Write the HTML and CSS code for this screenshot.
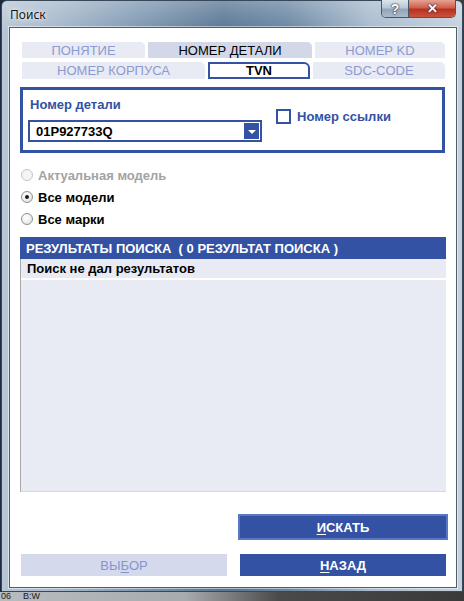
FILE: index.html
```html
<!DOCTYPE html>
<html lang="ru">
<head>
    <meta charset="UTF-8">
    <title>Поиск</title>
    <link rel="stylesheet" href="styles.css">
</head>
<body>
    <div class="window">
        <div class="titlebar">
            <span class="title">Поиск</span>
            <div class="caption-buttons">
                <span class="cap-btn cap-help">?</span>
                <span class="cap-btn cap-close">✕</span>
            </div>
        </div>
        <div class="client">
            <div class="tabs">
                <div class="tab-row">
                    <div class="tab w-concept">ПОНЯТИЕ</div>
                    <div class="tab tab-hover w-part">НОМЕР ДЕТАЛИ</div>
                    <div class="tab w-kd">НОМЕР KD</div>
                </div>
                <div class="tab-row row-2">
                    <div class="tab w-body">НОМЕР КОРПУСА</div>
                    <div class="tab tab-active w-tvn">TVN</div>
                    <div class="tab w-sdc">SDC-CODE</div>
                </div>
            </div>

            <div class="group">
                <div class="field">
                    <label class="field-label">Номер детали</label>
                    <div class="combo">
                        <span class="combo-value">01P927733Q</span>
                        <span class="combo-arrow"></span>
                    </div>
                </div>
                <label class="check">
                    <span class="check-box"></span>
                    <span class="check-label">Номер ссылки</span>
                </label>
            </div>

            <div class="radios">
                <div class="radio disabled"><span class="dot"></span>Актуальная модель</div>
                <div class="radio checked"><span class="dot"></span>Все модели</div>
                <div class="radio"><span class="dot"></span>Все марки</div>
            </div>

            <div class="results">
                <div class="results-head">РЕЗУЛЬТАТЫ ПОИСКА&nbsp; ( 0 РЕЗУЛЬТАТ ПОИСКА )</div>
                <div class="results-list">
                    <div class="results-row">Поиск не дал результатов</div>
                </div>
            </div>

            <div class="btn btn-search"><u>И</u>СКАТЬ</div>
            <div class="btn-row">
                <div class="btn btn-disabled">ВЫ<u>Б</u>ОР</div>
                <div class="btn"><u>Н</u>АЗАД</div>
            </div>
        </div>
    </div>
    <div class="desk-strip"><span>06</span><span>B:W</span></div>
</body>
</html>
```

FILE: styles.css
```css
:root {
    --blue: #3352a3;
    --blue-light: #5b77c2;
    --tab-bg: #e8eaf4;
    --tab-text: #8d9ad0;
    --list-bg: #e8ebf4;
}

* {
    box-sizing: border-box;
    margin: 0;
    padding: 0;
}

body {
    width: 464px;
    height: 601px;
    overflow: hidden;
    font-family: "Liberation Sans", Arial, sans-serif;
    font-size: 13px;
    background: linear-gradient(90deg, #1d2a3d 0%, #2a3a52 50%, #3b3b3b 100%);
}

/* окно с рамкой в стиле Aero */
.window {
    margin-left: 1px;
    width: 462px;
    height: 592px;
    display: flex;
    flex-direction: column;
    border: 1px solid #39475a;
    border-radius: 6px 6px 0 0;
    background:
        linear-gradient(180deg, rgba(255, 255, 255, 0.25) 0%, rgba(255, 255, 255, 0) 30px),
        linear-gradient(90deg, #b7c6d6 0%, #a5b8cb 12%, #7d97b1 30%, #577592 48%, #6886a3 62%, #a7bacd 80%, #c4d1de 100%);
}

.titlebar {
    height: 26px;
    flex: none;
    display: flex;
    padding: 0 6px 0 8px;
}

.title {
    align-self: center;
    margin-top: 1px;
    font-family: "Noto Sans", "Liberation Sans", sans-serif;
    font-size: 12px;
    color: #101820;
    text-shadow: 0 0 6px rgba(255, 255, 255, 0.9), 0 0 3px rgba(255, 255, 255, 0.8);
}

.caption-buttons {
    margin-left: auto;
    display: flex;
    height: 18px;
    margin-top: -1px;
    border: 1px solid #4a5566;
    border-top: none;
    border-radius: 0 0 5px 5px;
    overflow: hidden;
}

.cap-btn {
    display: flex;
    align-items: center;
    justify-content: center;
    font-weight: bold;
    color: #fff;
    text-shadow: 0 0 2px #2a2a2a, 0 0 1px #000;
}

.cap-help {
    width: 27px;
    font-size: 14px;
    border-right: 1px solid #4a5566;
    background: linear-gradient(180deg, #dde5ee 0%, #b9c7d6 45%, #93a6ba 55%, #a9bacb 100%);
}

.cap-close {
    width: 46px;
    font-size: 13px;
    background: linear-gradient(180deg, #e5a393 0%, #d0604c 45%, #b8301e 55%, #c9533e 100%);
}

/* клиентская область */
.client {
    margin: 0 5px 0 7px;
    width: 448px;
    height: 561px;
    display: flex;
    flex-direction: column;
    padding: 14px 10px 0 10px;
    background: #fff;
    border: 1px solid #4f5d6d;
    box-shadow: 0 0 0 1px rgba(255, 255, 255, 0.5);
}

/* вкладки */
.tabs {
    margin-left: 2px;
}

.tab-row {
    display: flex;
    gap: 3px;
    height: 16px;
}

.row-2 {
    margin-top: 4px;
    height: 17px;
}

.tab {
    display: flex;
    align-items: center;
    justify-content: center;
    color: var(--tab-text);
    background: var(--tab-bg);
    border-radius: 0 5px 0 0;
    font-size: 13px;
    line-height: 1;
}

.tab-hover {
    background: #d3d8e9;
    color: #000;
}

.tab-active {
    background: #fff;
    color: #000;
    font-weight: bold;
    border: 2px solid var(--blue);
    border-radius: 0 6px 0 0;
}

.w-concept { width: 123px; }
.w-part { width: 164px; }
.w-kd { width: 130px; }
.w-body { width: 183px; }
.w-tvn { width: 102px; }
.w-sdc { width: 132px; }

/* поле поиска */
.group {
    margin-top: 8px;
    width: 425px;
    height: 66px;
    display: flex;
    border: 3px solid var(--blue);
    padding: 7px 0 0 5px;
}

.field {
    display: flex;
    flex-direction: column;
}

.field-label {
    margin-left: 2px;
    font-weight: bold;
    color: var(--blue);
    line-height: 16px;
}

.combo {
    margin-top: 7px;
    width: 234px;
    height: 22px;
    display: flex;
    align-items: center;
    border: 2px solid var(--blue);
    padding: 1px;
}

.combo-value {
    flex: 1;
    padding-left: 5px;
    font-weight: bold;
    color: #000;
}

.combo-arrow {
    width: 15px;
    height: 16px;
    background: var(--blue);
    position: relative;
}

.combo-arrow::after {
    content: '';
    position: absolute;
    left: 4px;
    top: 7px;
    border-left: 4px solid transparent;
    border-right: 4px solid transparent;
    border-top: 4px solid #fff;
}

.check {
    display: flex;
    align-items: center;
    gap: 6px;
    margin-left: 14px;
    margin-top: 12px;
    height: 15px;
}

.check-box {
    width: 15px;
    height: 15px;
    border: 2px solid var(--blue);
    background: #fff;
}

.check-label {
    font-weight: bold;
    color: var(--blue);
}

/* переключатели */
.radios {
    margin-top: 11px;
    margin-left: 1px;
}

.radio {
    height: 22px;
    display: flex;
    align-items: center;
    gap: 5px;
    font-weight: bold;
    color: #000;
}

.radio.disabled {
    color: #a3a3a3;
}

.dot {
    width: 12px;
    height: 12px;
    border-radius: 50%;
    border: 1px solid #8e8f8f;
    background: radial-gradient(circle at 40% 35%, #ffffff 0%, #f0f0f0 50%, #d8d8d8 100%);
    position: relative;
}

.radio.disabled .dot {
    border-color: #c4c4c4;
    background: #f4f4f4;
}

.radio.checked .dot::after {
    content: '';
    position: absolute;
    left: 3px;
    top: 3px;
    width: 4px;
    height: 4px;
    border-radius: 50%;
    background: #1a1a1a;
}

/* результаты */
.results {
    margin-top: 7px;
    width: 426px;
}

.results-head {
    height: 22px;
    display: flex;
    align-items: center;
    padding-left: 6px;
    background: var(--blue);
    color: #fff;
    font-weight: bold;
}

.results-list {
    height: 233px;
    background: var(--list-bg);
    border-left: 1px solid #a8a8a8;
    border-bottom: 1px solid #d8d8d8;
}

.results-row {
    height: 21px;
    padding-left: 6px;
    display: flex;
    align-items: center;
    font-weight: bold;
    color: #000;
    border-bottom: 2px solid #fff;
}

/* кнопки */
.btn {
    width: 206px;
    height: 22px;
    display: flex;
    align-items: center;
    justify-content: center;
    background: var(--blue);
    color: #fff;
    font-weight: bold;
}

.btn u {
    text-underline-offset: 2px;
}

.btn-search {
    margin-top: 22px;
    align-self: flex-end;
    margin-right: -2px;
    width: 210px;
    height: 26px;
    border: 2px solid var(--blue-light);
}

.btn-row {
    margin-top: 14px;
    display: flex;
    justify-content: space-between;
    padding-left: 1px;
}

.btn-disabled {
    background: #d4daec;
    color: #8694cc;
    font-weight: normal;
}

.desk-strip {
    height: 9px;
    display: flex;
    align-items: center;
    gap: 12px;
    padding-left: 1px;
    font-size: 9px;
    line-height: 9px;
    color: #1b1b1b;
    background: linear-gradient(90deg, #b9bcbf 0%, #a8abae 40%, #4a4a4a 60%, #3a3a3a 100%);
}
```
